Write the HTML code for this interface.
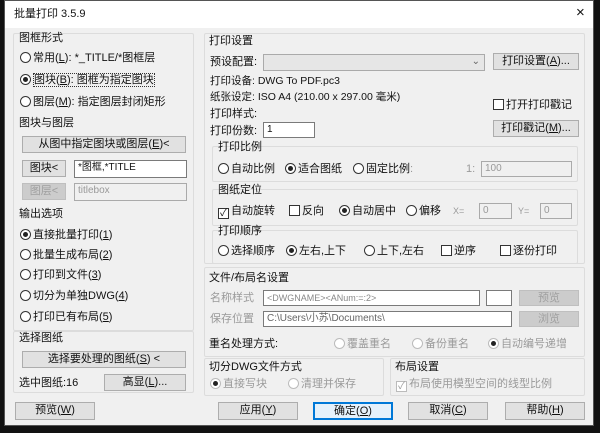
<!DOCTYPE html>
<html><head><meta charset="utf-8"><style>
*{box-sizing:border-box;margin:0;padding:0}
body{width:600px;height:433px;overflow:hidden;background:#111;position:relative;font-family:"Liberation Sans","Noto Sans CJK SC",sans-serif;font-size:11px;color:#111}
#win{position:absolute;left:4px;top:0;width:590px;height:426px;background:#f0f0f0;border:1px solid #555}
#title{position:absolute;left:0;top:0;width:100%;height:27px;background:#fff}
.a{position:absolute;white-space:nowrap;line-height:14px}
.g{color:#9a9a9a}
.b{position:absolute;background:#e1e1e1;border:1px solid #adadad;text-align:center;line-height:15px;white-space:nowrap}
.b.d{color:#a0a0a0;background:#ccc;border-color:#bfbfbf}
.i{position:absolute;background:#fff;border:1px solid #7a7a7a;padding-left:3px;line-height:14px;white-space:nowrap;font-size:10px}
.i.d{background:#f0f0f0;border-color:#aaa;color:#999}
.r{display:inline-block;width:11px;height:11px;border:1px solid #333;border-radius:50%;vertical-align:-2px;margin-right:2px;background:#fff;position:relative}
.r.on::after{content:"";position:absolute;left:2px;top:2px;width:5px;height:5px;border-radius:50%;background:#222}
.r.dd{border-color:#bbb}
.c{display:inline-block;width:11px;height:11px;border:1px solid #333;vertical-align:-2px;margin-right:2px;background:#fff;position:relative;font-size:10px;line-height:9px;text-align:center}
.c.dd{border-color:#bbb}
.gb{position:absolute;border:1px solid #dcdcdc;border-radius:2px}
</style></head><body>
<div id="win">
<div id="title"></div>
<div class="a" style="left:9px;top:6px;font-size:11px">批量打印 3.5.9</div>
<div class="a" style="left:571px;top:5px;font-size:15px">×</div>
</div>
<!-- group frames -->
<div class="gb" style="left:13px;top:33px;width:181px;height:298px"></div>
<div class="gb" style="left:13px;top:331px;width:181px;height:62px"></div>
<div class="gb" style="left:204px;top:33px;width:381px;height:231px"></div>
<div class="gb" style="left:204px;top:267px;width:381px;height:90px"></div>
<div class="gb" style="left:204px;top:358px;width:180px;height:38px"></div>
<div class="gb" style="left:390px;top:358px;width:195px;height:38px"></div>
<!-- left -->
<div class="a" style="left:19px;top:31px">图框形式</div>
<div class="a" style="left:20px;top:51px"><span class="r"></span>常用(<u>L</u>): *_TITLE/*图框层</div>
<div class="a" style="left:20px;top:73px"><span class="r on"></span><span style="border:1px dotted #333">图块(<u>B</u>): 图框为指定图块</span></div>
<div class="a" style="left:20px;top:95px"><span class="r"></span>图层(<u>M</u>): 指定图层封闭矩形</div>
<div class="a" style="left:19px;top:116px">图块与图层</div>
<div class="b" style="left:22px;top:136px;width:164px;height:17px">从图中指定图块或图层(<u>E</u>)&lt;</div>
<div class="b" style="left:22px;top:160px;width:44px;height:17px">图块&lt;</div>
<div class="i" style="left:74px;top:160px;width:113px;height:18px">*图框,*TITLE</div>
<div class="b d" style="left:22px;top:183px;width:44px;height:17px">图层&lt;</div>
<div class="i d" style="left:74px;top:183px;width:113px;height:18px">titlebox</div>
<div class="a" style="left:19px;top:207px">输出选项</div>
<div class="a" style="left:20px;top:228px"><span class="r on"></span>直接批量打印(<u>1</u>)</div>
<div class="a" style="left:20px;top:248px"><span class="r"></span>批量生成布局(<u>2</u>)</div>
<div class="a" style="left:20px;top:268px"><span class="r"></span>打印到文件(<u>3</u>)</div>
<div class="a" style="left:20px;top:289px"><span class="r"></span>切分为单独DWG(<u>4</u>)</div>
<div class="a" style="left:20px;top:310px"><span class="r"></span>打印已有布局(<u>5</u>)</div>
<div class="a" style="left:19px;top:331px">选择图纸</div>
<div class="b" style="left:22px;top:351px;width:164px;height:17px">选择要处理的图纸(<u>S</u>) &lt;</div>
<div class="a" style="left:19px;top:376px">选中图纸:16</div>
<div class="b" style="left:104px;top:374px;width:82px;height:17px">高显(<u>L</u>)...</div>
<!-- right -->
<div class="a" style="left:209px;top:34px">打印设置</div>
<div class="a" style="left:210px;top:55px">预设配置:</div>
<div class="i d" style="left:263px;top:54px;width:222px;height:17px;background:#e6e6e6"><span style="position:absolute;right:4px;color:#666">⌄</span></div>
<div class="b" style="left:493px;top:53px;width:86px;height:17px">打印设置(<u>A</u>)...</div>
<div class="a" style="left:210px;top:74px;font-size:10.5px">打印设备: DWG To PDF.pc3</div>
<div class="a" style="left:210px;top:90px;font-size:10.5px">纸张设定: ISO A4 (210.00 x 297.00 毫米)</div>
<div class="a" style="left:210px;top:107px">打印样式:</div>
<div class="a" style="left:493px;top:98px"><span class="c"></span>打开打印戳记</div>
<div class="b" style="left:493px;top:120px;width:86px;height:17px">打印戳记(<u>M</u>)...</div>
<div class="a" style="left:210px;top:124px">打印份数:</div>
<div class="i" style="left:263px;top:122px;width:52px;height:16px">1</div>
<div class="gb" style="left:212px;top:146px;width:366px;height:36px"></div>
<div class="a" style="left:218px;top:140px">打印比例</div>
<div class="a" style="left:218px;top:162px"><span class="r"></span>自动比例</div>
<div class="a" style="left:285px;top:162px"><span class="r on"></span>适合图纸</div>
<div class="a" style="left:353px;top:162px"><span class="r"></span>固定比例<span class="g">:</span></div>
<div class="a g" style="left:466px;top:162px">1:</div>
<div class="i d" style="left:481px;top:161px;width:91px;height:16px">100</div>
<div class="gb" style="left:212px;top:189px;width:366px;height:37px"></div>
<div class="a" style="left:218px;top:183px">图纸定位</div>
<div class="a" style="left:218px;top:204px"><span class="c">✓</span>自动旋转</div>
<div class="a" style="left:289px;top:204px"><span class="c"></span>反向</div>
<div class="a" style="left:339px;top:204px"><span class="r on"></span>自动居中</div>
<div class="a" style="left:406px;top:204px"><span class="r"></span>偏移</div>
<div class="a g" style="left:453px;top:204px;font-size:9px">X=</div>
<div class="i d" style="left:479px;top:203px;width:33px;height:16px">0</div>
<div class="a g" style="left:518px;top:204px;font-size:9px">Y=</div>
<div class="i d" style="left:540px;top:203px;width:32px;height:16px">0</div>
<div class="gb" style="left:212px;top:230px;width:366px;height:34px"></div>
<div class="a" style="left:218px;top:224px">打印顺序</div>
<div class="a" style="left:218px;top:244px"><span class="r"></span>选择顺序</div>
<div class="a" style="left:286px;top:244px"><span class="r on"></span>左右,上下</div>
<div class="a" style="left:364px;top:244px"><span class="r"></span>上下,左右</div>
<div class="a" style="left:441px;top:244px"><span class="c"></span>逆序</div>
<div class="a" style="left:500px;top:244px"><span class="c"></span>逐份打印</div>
<div class="a" style="left:209px;top:271px">文件/布局名设置</div>
<div class="a g" style="left:210px;top:291px">名称样式</div>
<div class="i" style="left:263px;top:290px;width:217px;height:16px;color:#888;font-size:9px">&lt;DWGNAME&gt;&lt;ANum:=:2&gt;</div>
<div class="i" style="left:486px;top:290px;width:26px;height:16px"></div>
<div class="b d" style="left:519px;top:290px;width:60px;height:16px">预览</div>
<div class="a g" style="left:210px;top:312px">保存位置</div>
<div class="i" style="left:263px;top:311px;width:249px;height:16px;color:#666;font-size:10px">C:\Users\小苏\Documents\</div>
<div class="b d" style="left:519px;top:311px;width:60px;height:16px">浏览</div>
<div class="a" style="left:209px;top:337px">重名处理方式:</div>
<div class="a g" style="left:334px;top:337px"><span class="r dd"></span>覆盖重名</div>
<div class="a g" style="left:412px;top:337px"><span class="r dd"></span>备份重名</div>
<div class="a g" style="left:488px;top:337px"><span class="r dd on"></span>自动编号递增</div>
<div class="a" style="left:209px;top:360px">切分DWG文件方式</div>
<div class="a g" style="left:210px;top:377px"><span class="r dd on"></span>直接写块</div>
<div class="a g" style="left:288px;top:377px"><span class="r dd"></span>清理并保存</div>
<div class="a" style="left:395px;top:360px">布局设置</div>
<div class="a g" style="left:396px;top:377px"><span class="c dd">✓</span>布局使用模型空间的线型比例</div>
<!-- bottom -->
<div class="b" style="left:15px;top:402px;width:80px;height:18px">预览(<u>W</u>)</div>
<div class="b" style="left:218px;top:402px;width:80px;height:18px">应用(<u>Y</u>)</div>
<div class="b" style="left:313px;top:402px;width:80px;height:18px;border:2px solid #0078d7;background:#e5f1fb;line-height:14px">确定(<u>O</u>)</div>
<div class="b" style="left:408px;top:402px;width:80px;height:18px">取消(<u>C</u>)</div>
<div class="b" style="left:505px;top:402px;width:80px;height:18px">帮助(<u>H</u>)</div>
</body></html>
